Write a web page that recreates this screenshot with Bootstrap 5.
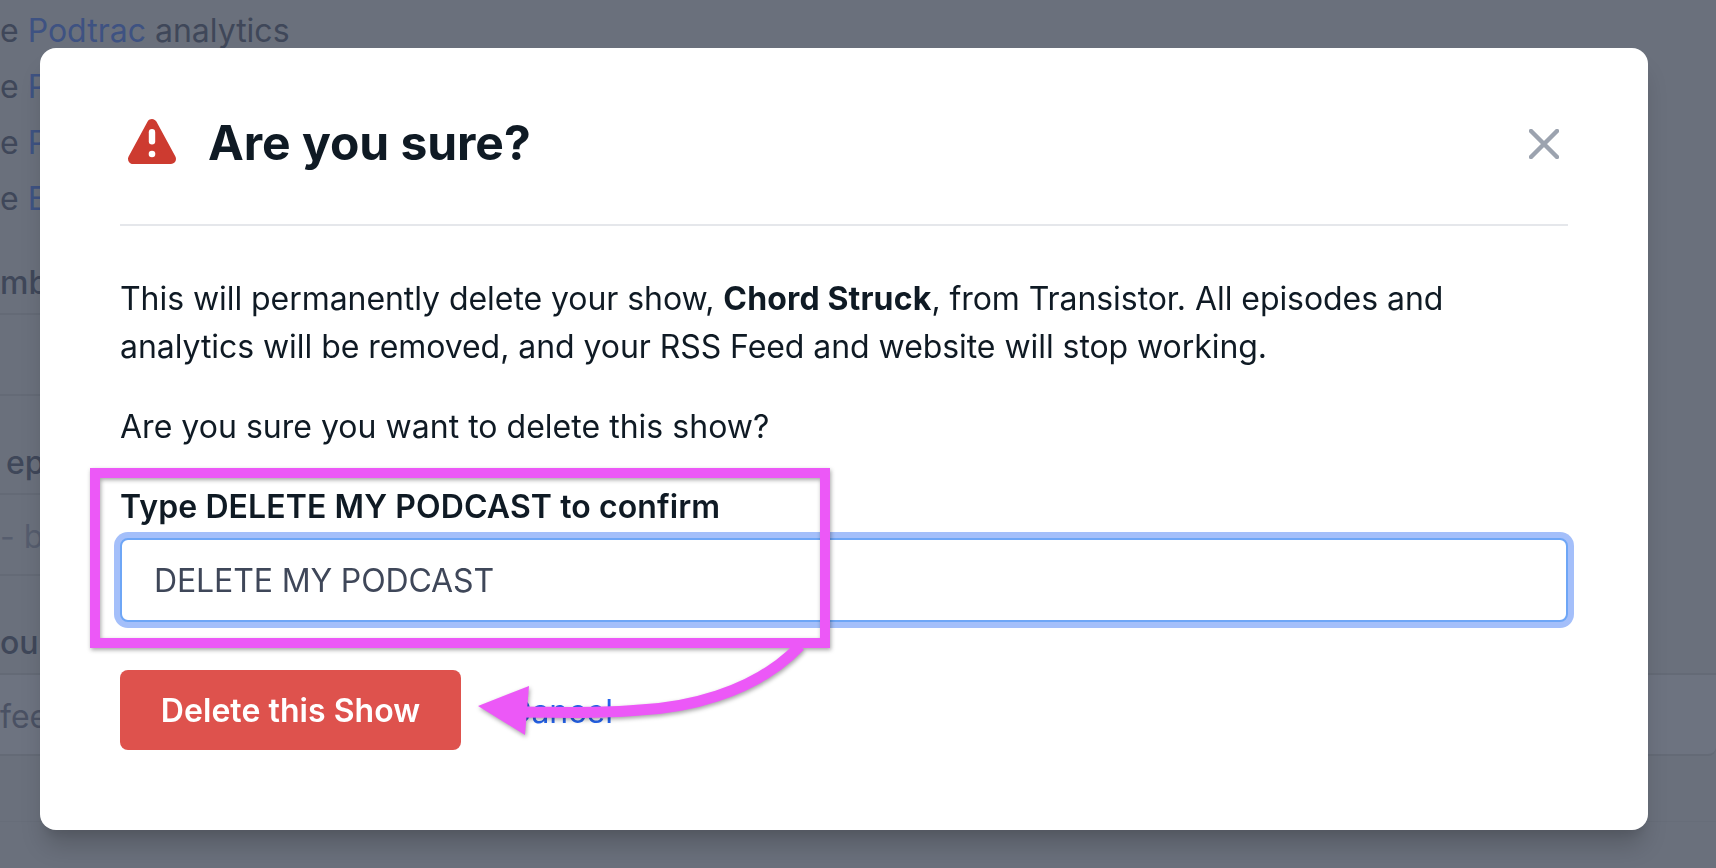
<!DOCTYPE html>
<html lang="en">
<head>
<meta charset="utf-8">
<title>Are you sure?</title>
<link href="https://cdn.jsdelivr.net/npm/bootstrap@5.3.0/dist/css/bootstrap.min.css" rel="stylesheet">
<style>
html,body{height:100%;overflow:hidden}
body{background:#6a707c;font-family:Inter,"Liberation Sans",sans-serif;color:#0f1a24}
.page-under{font-size:32px;color:#3f4759;padding-top:3px;height:868px;overflow:hidden;white-space:nowrap}
.under-line{height:56px;line-height:56px}
.under-link{color:#3e5282}
.under-head{height:60px;line-height:56px;margin-top:28px;border-bottom:2px solid #646a76;width:1000px;font-weight:500}
.under-row{height:81px;border-bottom:2px solid #646a76;display:flex;align-items:center;width:1000px;padding-top:5px}
.under-row.tall{height:99px;line-height:78px;align-items:flex-start;padding-top:28px;font-weight:500}
.under-row.blank{padding-top:0}
.under-row.full{width:100%;border-top-right-radius:8px}
.under-row.closing{width:100%;background:#6d7380;border-bottom-right-radius:8px;border-top-right-radius:0}
.under-indent{padding-left:6px}
.under-faint{color:#565d6e}
.under-body{color:#4a5163}
.under-after{height:66px;border-bottom:1px solid #676d79}
.modal.sheet{display:block;padding:48px 68px 38px 40px!important;overflow:hidden}
.sheet .modal-dialog{max-width:none;width:1608px;margin:0}
.sheet .modal-content{height:782px;border:0;border-radius:16px;padding:66px 80px 0;box-shadow:0 20px 25px -5px rgba(0,0,0,.18),0 10px 10px -5px rgba(0,0,0,.08);color:#0f1a24}
.sheet-head{border-bottom:2px solid #e5e7eb;padding:0 0 54px;height:112px}
.sheet-title{font-size:48px;line-height:58px;font-weight:700;margin:0 0 0 24px;color:#0f1a24;letter-spacing:-.06px}
.sheet-body{font-size:32px;line-height:47.6px;padding-top:49px}
.sheet-body p{margin:0 0 33px}
.sheet-body p.sheet-lead{letter-spacing:-.06px}
.sheet-body p.sheet-lead b{letter-spacing:.15px}
.sheet-body p.sheet-ask{margin-bottom:36px;letter-spacing:.02px}
.sheet-label{font-size:32px;line-height:40px;font-weight:600;margin:0 0 11px;display:block;letter-spacing:.1px}
.sheet-input.form-control{height:84px;border:2px solid #6ea6f6;border-radius:8px;box-shadow:0 0 0 6px #a4bffa;padding:2px 32px 0;font-size:32px;color:#3f4759;background:#fff;letter-spacing:-.13px}
.sheet-actions{margin-top:48px}
.sheet-btn.btn{height:80px;width:341px;background:#de524d;border:0;border-radius:8px;color:#fff;font-size:32px;font-weight:600;padding:2px 0 0;letter-spacing:.05px}
.sheet-cancel{margin-left:47px;padding-top:4px;color:#2563eb;text-decoration:none;font-size:32px}
.sheet-close{background:none;border:0;padding:0;width:30px;height:30px;margin:15px 9px 0 0;line-height:0}
.callout{position:fixed;left:0;top:0;width:1716px;height:868px;pointer-events:none;z-index:1060}
.callout-shape{filter:drop-shadow(1px 2px 2px rgba(0,0,0,.35))}
</style>
</head>
<body>
<div class="page-under">
  <div class="under-line">e <span class="under-link">Podtrac</span> analytics</div>
  <div class="under-line">e <span class="under-link">P</span></div>
  <div class="under-line">e <span class="under-link">P</span></div>
  <div class="under-line">e <span class="under-link">E</span></div>
  <div class="under-head">mbe</div>
  <div class="under-row blank"></div>
  <div class="under-row tall"><span class="under-indent">ep</span></div>
  <div class="under-row under-faint">- b</div>
  <div class="under-row tall full">our</div>
  <div class="under-row closing under-body">fee</div>
  <div class="under-after"></div>
</div>

<div class="modal sheet" tabindex="-1" role="dialog" aria-modal="true">
  <div class="modal-dialog">
    <div class="modal-content">
      <div class="sheet-head d-flex align-items-start justify-content-between">
        <div class="d-flex align-items-center">
          <svg width="64" height="56" viewBox="120 114 64 56" aria-hidden="true">
            <path d="M152 123 133 158H171Z" fill="#cd3b30" stroke="#cd3b30" stroke-width="10" stroke-linejoin="round"/>
            <rect x="148.8" y="128" width="6.4" height="15.5" rx="3.2" fill="#fff"/>
            <circle cx="152" cy="153" r="3.3" fill="#fff"/>
          </svg>
          <h1 class="sheet-title">Are you sure?</h1>
        </div>
        <button class="sheet-close" type="button" aria-label="Close">
          <svg width="30" height="30" viewBox="0 0 30 30" aria-hidden="true"><path d="M2 2 28 28M28 2 2 28" stroke="#9ca3af" stroke-width="4.5" stroke-linecap="round"/></svg>
        </button>
      </div>
      <div class="sheet-body">
        <p class="sheet-lead">This will permanently delete your show, <b>Chord Struck</b>, from Transistor. All episodes and analytics will be removed, and your RSS Feed and website will stop working.</p>
        <p class="sheet-ask">Are you sure you want to delete this show?</p>
        <label class="sheet-label" for="confirm">Type DELETE MY PODCAST to confirm</label>
        <input id="confirm" class="form-control sheet-input" type="text" value="DELETE MY PODCAST">
        <div class="sheet-actions d-flex align-items-center">
          <button class="btn sheet-btn" type="button">Delete this Show</button>
          <a class="sheet-cancel" href="#">Cancel</a>
        </div>
      </div>
    </div>
  </div>
</div>

<svg class="callout" viewBox="0 0 1716 868" aria-hidden="true">
  <g class="callout-shape">
    <path d="M800 646C752 696 680 708 640 710 600 714 560 712 518 712" fill="none" stroke="#ec58f7" stroke-width="11"/>
    <path d="M478 706 529 686 525 735Z" fill="#ec58f7"/>
    <rect x="95" y="473" width="730" height="170" fill="none" stroke="#ec58f7" stroke-width="10"/>
  </g>
</svg>
</body>
</html>
